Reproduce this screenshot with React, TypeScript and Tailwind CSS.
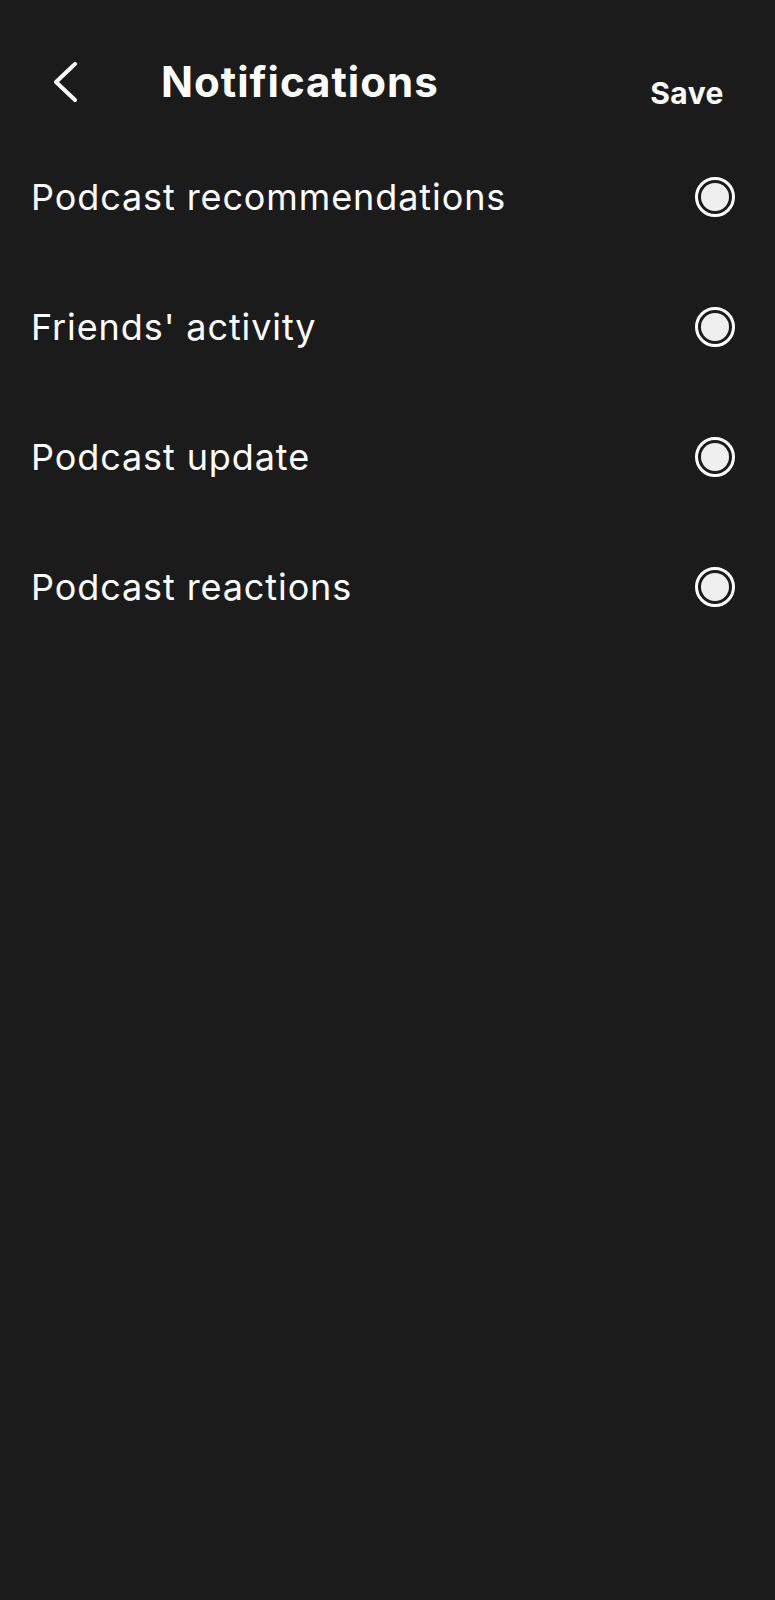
import React from 'react';

const items = [
  'Podcast recommendations',
  "Friends' activity",
  'Podcast update',
  'Podcast reactions',
];

function Radio() {
  return (
    <div className="w-10 h-10 rounded-full border-[3px] border-white flex items-center justify-center">
      <div className="w-7 h-7 rounded-full bg-[#efefef]" />
    </div>
  );
}

export default function App() {
  return (
    <div className="min-h-[1600px] bg-[#1b1b1b] text-white font-['Inter',sans-serif]">
      <div className="flex items-start h-[132px] pl-[51px] pr-[51px]">
        <svg width="28" height="44" viewBox="0 0 28 44" className="mt-[60px]" fill="none">
          <polyline points="24,4 5,22 24,40" stroke="white" strokeWidth="4" strokeLinecap="round" strokeLinejoin="round" />
        </svg>
        <h1 className="ml-[82px] mt-[57px] text-[42px] leading-[50px] font-bold tracking-[1px]">Notifications</h1>
        <button className="ml-auto mt-[75px] text-[30px] leading-[36px] font-bold tracking-[0.5px]">Save</button>
      </div>
      <div className="flex flex-col">
        {items.map((label) => (
          <div key={label} className="h-[130px] flex items-center justify-between pl-[31px] pr-[40px]">
            <span className="text-[36px] tracking-[0.9px]">{label}</span>
            <Radio />
          </div>
        ))}
      </div>
    </div>
  );
}
